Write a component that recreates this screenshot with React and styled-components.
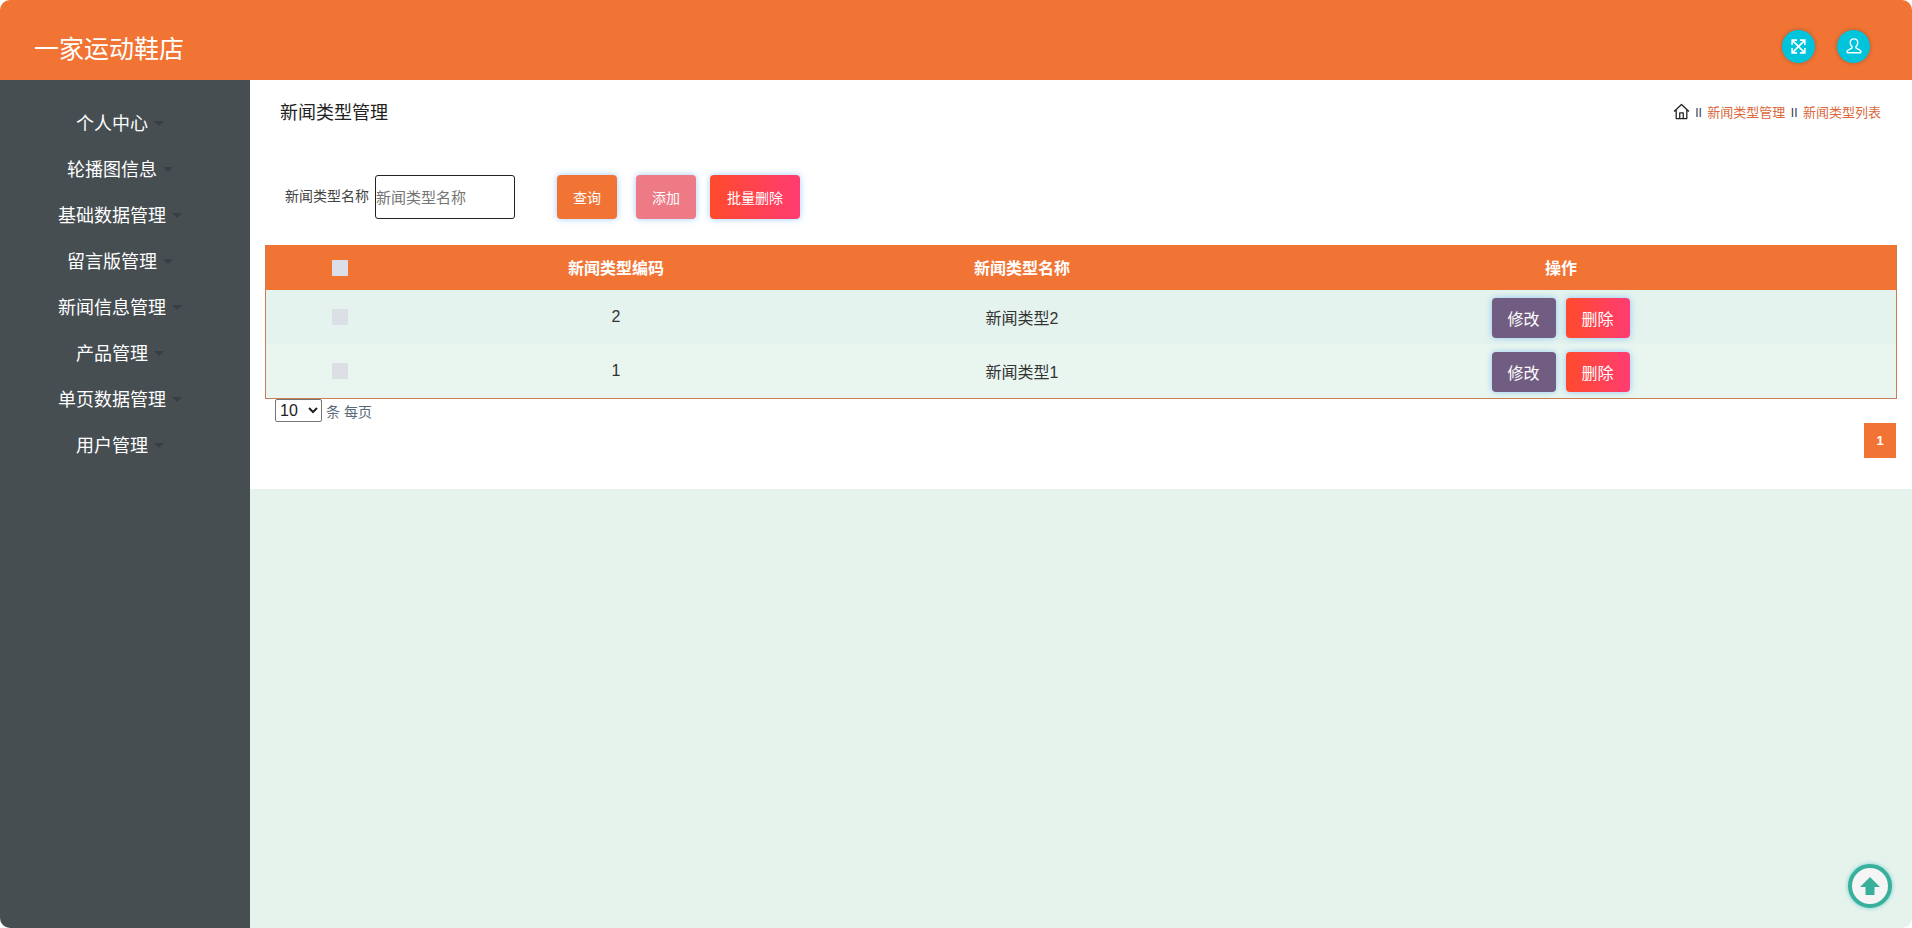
import React from "react";
import styled, { createGlobalStyle } from "styled-components";

const GlobalStyle = createGlobalStyle`
  html, body {
    margin: 0;
    height: 100%;
    background: #fff;
    overflow: hidden;
  }
  * {
    box-sizing: border-box;
  }
  body {
    font-family: "Liberation Sans", "Noto Sans CJK SC", sans-serif;
    color: #333;
  }
`;

const Page = styled.div`
  height: 928px;
  display: flex;
  flex-direction: column;
  border-radius: 10px;
  overflow: hidden;
  background: #e6f3ec;
`;

const Header = styled.header`
  height: 80px;
  flex: none;
  background: #f27434;
  display: flex;
  align-items: center;
  justify-content: space-between;
  padding: 14px 42px 0 34px;
`;

const Brand = styled.div`
  color: #fff;
  font-size: 25px;
`;

const HeaderTools = styled.div`
  display: flex;
  gap: 22px;
  margin-top: -2px;
`;

const RoundTool = styled.div`
  width: 33px;
  height: 33px;
  border-radius: 50%;
  background: #00c4dc;
  box-shadow: 0 0 4px rgba(60, 60, 60, 0.45);
  display: flex;
  align-items: center;
  justify-content: center;
  color: #fff;
`;

const Body = styled.div`
  flex: 1;
  display: flex;
  min-height: 0;
`;

const Sidebar = styled.nav`
  width: 250px;
  flex: none;
  background: #464e52;
  padding: 19px 10px 0 0;
`;

const MenuItem = styled.div`
  height: 46px;
  display: flex;
  align-items: center;
  justify-content: center;
  color: #fff;
  font-size: 18px;
`;

const Caret = styled.span`
  width: 0;
  height: 0;
  margin-left: 6px;
  margin-top: 2px;
  border-top: 5px solid #383f44;
  border-left: 5px solid transparent;
  border-right: 5px solid transparent;
`;

const Main = styled.main`
  flex: 1;
  min-width: 0;
  position: relative;
`;

const Card = styled.section`
  height: 409px;
  background: #fff;
  padding: 0 15px;
`;

const TitleRow = styled.div`
  height: 61px;
  display: flex;
  align-items: center;
  justify-content: space-between;
  padding: 0 16px 0 15px;
`;

const PageTitle = styled.h1`
  margin: 0;
  font-size: 18px;
  font-weight: 400;
  color: #222;
`;

const Crumbs = styled.div`
  display: flex;
  align-items: center;
  gap: 5.5px;
  font-size: 13px;
  color: #d9683a;
  margin-top: 1px;
`;

const CrumbSep = styled.span`
  color: #2c3e50;
  font-size: 12px;
  margin-top: 3px;
`;

const SearchRow = styled.div`
  margin-top: 34px;
  height: 44px;
  display: flex;
  align-items: center;
  padding-left: 20px;
`;

const FieldLabel = styled.label`
  font-size: 14px;
  color: #444;
  width: 90px;
  white-space: nowrap;
  margin-top: -4px;
`;

const SearchInput = styled.input`
  width: 140px;
  height: 44px;
  border: 1px solid #222;
  border-radius: 3px;
  padding: 0;
  font: inherit;
  font-size: 15px;
  outline: none;
  margin-right: 42px;
  &::placeholder {
    color: #757575;
  }
`;

const ActionButton = styled.button`
  height: ${(p) => (p.$small ? "40px" : "44px")};
  width: ${(p) => p.$width}px;
  margin-right: ${(p) => p.$gap || 0}px;
  margin-top: ${(p) => (p.$small ? "2px" : "0")};
  vertical-align: middle;
  border: none;
  border-radius: 4px;
  padding: 0;
  color: #fff;
  font: inherit;
  font-size: ${(p) => (p.$small ? "16px" : "14px")};
  background: ${(p) => p.$bg};
  box-shadow: 0 0 6px rgba(64, 158, 255, 0.5);
`;

const TableWrap = styled.div`
  margin-top: 26px;
  border: solid #c97e58;
  border-width: 0 1px 1px;
`;

const Table = styled.table`
  width: 100%;
  table-layout: fixed;
  border-collapse: collapse;
`;

const HeadCell = styled.th`
  height: 45px;
  padding: 0 0 1px;
  background: #f27434;
  color: #fff;
  font-size: 16px;
  font-weight: 700;
  text-align: center;
`;

const Row = styled.tr`
  background: ${(p) => p.$bg};
`;

const Cell = styled.td`
  height: 54px;
  padding: 0 ${(p) => p.$padRight || 0}px 1px 0;
  text-align: center;
  font-size: 16px;
  color: #333;
`;

const Check = styled.span`
  display: inline-block;
  width: 16px;
  height: 16px;
  background: #dcdfe6;
  vertical-align: middle;
`;

const Pager = styled.div`
  display: flex;
  align-items: center;
  gap: 4px;
  padding-left: 10px;
  font-size: 14px;
  color: #5a6a7a;
`;

const PageSize = styled.select`
  width: 47px;
  height: 23px;
  font: inherit;
  font-size: 16px;
  color: #222;
  background: #fff;
  border: 1px solid #767676;
  border-radius: 2px;
`;

const PagerRight = styled.div`
  display: flex;
  justify-content: flex-end;
  padding-right: 1px;
  margin-top: 1px;
`;

const PageNum = styled.div`
  width: 32px;
  height: 35px;
  background: #f27434;
  color: #fff;
  font-size: 13px;
  font-weight: 700;
  display: flex;
  align-items: center;
  justify-content: center;
`;

const BackTop = styled.div`
  position: absolute;
  right: 20px;
  bottom: 20px;
  width: 44px;
  height: 44px;
  border-radius: 50%;
  background: #f5f5f5;
  border: 4px solid #38b09c;
  box-shadow: 0 0 4px rgba(56, 190, 200, 0.7);
  display: flex;
  align-items: center;
  justify-content: center;
`;

const menu = ["个人中心", "轮播图信息", "基础数据管理", "留言版管理", "新闻信息管理", "产品管理", "单页数据管理", "用户管理"];
const rows = [
  { code: "2", name: "新闻类型2", bg: "#e4f3ed" },
  { code: "1", name: "新闻类型1", bg: "#e9f6ef" },
];
const red = "linear-gradient(90deg, #ff4a2c, #ff3c72)";

const ExpandIcon = () => (
  <svg width="17" height="17" viewBox="0 0 24 24" fill="none" stroke="currentColor" strokeWidth="2.2">
    <path d="M4 4l16 16M20 4L4 20" />
    <path d="M3 10V3h7M14 3h7v7M21 14v7h-7M10 21H3v-7" />
  </svg>
);

const UserIcon = () => (
  <svg width="18" height="18" viewBox="0 0 24 24" fill="none" stroke="currentColor" strokeWidth="1.9" strokeLinejoin="round">
    <path d="M12 2.5c-3.2 0-5 2.3-5 5.2 0 2.2.9 3.8 2.2 5 .5.5.4 1.600-.3 2.100L3.500 18c-1.200.8-1 3 .5 3h16c1.500 0 1.700-2.200.5-3l-5.400-3.200c-.7-.5-.8-1.600-.3-2.100 1.300-1.200 2.200-2.800 2.200-5 0-2.900-1.800-5.200-5-5.200z" />
  </svg>
);

const HomeIcon = () => (
  <svg width="17" height="17" viewBox="0 0 24 24" fill="none" stroke="#222" strokeWidth="1.800" strokeLinejoin="round">
    <path d="M1.500 12L12 2l10.500 10M4.500 10v12h15V10" />
    <path d="M9.500 22v-8h5v8" />
  </svg>
);

const UpArrow = () => (
  <svg width="20" height="20" viewBox="0 0 20 20" fill="#38b09c">
    <path d="M10 1L20 11H14.500V19H5.500V11H0z" />
  </svg>
);

export default function App() {
  return (
    <>
      <GlobalStyle />
      <Page>
        <Header>
          <Brand>一家运动鞋店</Brand>
          <HeaderTools>
            <RoundTool><ExpandIcon /></RoundTool>
            <RoundTool><UserIcon /></RoundTool>
          </HeaderTools>
        </Header>
        <Body>
          <Sidebar>
            {menu.map((item) => (
              <MenuItem key={item}>
                {item}
                <Caret />
              </MenuItem>
            ))}
          </Sidebar>
          <Main>
            <Card>
              <TitleRow>
                <PageTitle>新闻类型管理</PageTitle>
                <Crumbs>
                  <HomeIcon />
                  <CrumbSep>II</CrumbSep>
                  <span>新闻类型管理</span>
                  <CrumbSep>II</CrumbSep>
                  <span>新闻类型列表</span>
                </Crumbs>
              </TitleRow>
              <SearchRow>
                <FieldLabel>新闻类型名称</FieldLabel>
                <SearchInput placeholder="新闻类型名称" />
                <ActionButton $width={60} $gap={19} $bg="#f27434">查询</ActionButton>
                <ActionButton $width={60} $gap={14} $bg="#ee7a85">添加</ActionButton>
                <ActionButton $width={90} $bg={red}>批量删除</ActionButton>
              </SearchRow>
              <TableWrap>
                <Table>
                  <colgroup>
                    <col style={{ width: 148 }} />
                    <col style={{ width: 404 }} />
                    <col style={{ width: 408 }} />
                    <col />
                  </colgroup>
                  <thead>
                    <tr>
                      <HeadCell><Check /></HeadCell>
                      <HeadCell>新闻类型编码</HeadCell>
                      <HeadCell>新闻类型名称</HeadCell>
                      <HeadCell>操作</HeadCell>
                    </tr>
                  </thead>
                  <tbody>
                    {rows.map((row) => (
                      <Row key={row.code} $bg={row.bg}>
                        <Cell><Check /></Cell>
                        <Cell>{row.code}</Cell>
                        <Cell>{row.name}</Cell>
                        <Cell $padRight={1}>
                          <ActionButton $small $width={64} $gap={10} $bg="#725d82">修改</ActionButton>
                          <ActionButton $small $width={64} $bg={red}>删除</ActionButton>
                        </Cell>
                      </Row>
                    ))}
                  </tbody>
                </Table>
              </TableWrap>
              <Pager>
                <PageSize defaultValue="10">
                  <option>10</option>
                </PageSize>
                条 每页
              </Pager>
              <PagerRight>
                <PageNum>1</PageNum>
              </PagerRight>
            </Card>
            <BackTop><UpArrow /></BackTop>
          </Main>
        </Body>
      </Page>
    </>
  );
}
